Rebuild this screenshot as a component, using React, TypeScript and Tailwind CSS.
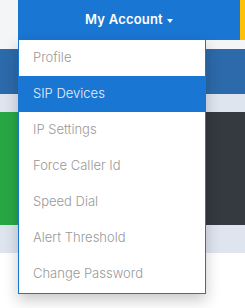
export default function App() {
  const items = [
    "Profile",
    "SIP Devices",
    "IP Settings",
    "Force Caller Id",
    "Speed Dial",
    "Alert Threshold",
    "Change Password",
  ];
  const active = 1;

  return (
    <div
      className="relative w-[245px] h-[308px] overflow-hidden bg-white"
      style={{ fontFamily: "Inter, 'Open Sans', sans-serif" }}
    >
      {/* top nav */}
      <div className="flex h-10 bg-[#f4f5f7]">
        <div className="w-[18px]" />
        <div className="flex flex-1 items-center justify-center bg-[#1976d2] text-white">
          <span className="text-[13px] font-semibold tracking-[0.2px]">My Account</span>
          <span className="ml-[4px] mt-[1px] h-0 w-0 border-x-[3px] border-t-[4px] border-x-transparent border-t-white" />
        </div>
        <div className="w-[5px] bg-[#ffc107]" />
      </div>

      {/* page underneath */}
      <div className="h-[9px] bg-[#f4f5f7]" />
      <div className="h-[45px] bg-[#2c6aab]" />
      <div className="h-[18px] bg-[#dfe5ef]" />
      <div className="flex h-[113px]">
        <div className="w-[18px] bg-[#28a745]" />
        <div className="flex-1 bg-white" />
        <div className="w-[40px] bg-[#343a40]" />
      </div>
      <div className="h-[28px] bg-[#dfe5ef]" />

      {/* dropdown */}
      <div className="absolute left-[18px] top-10 w-[188px] border border-t-0 border-[#1976d2] bg-white pb-px shadow-[0_6px_14px_rgba(0,0,0,0.22)]">
        {items.map((item, i) => (
          <div
            key={item}
            className={
              i === active
                ? "flex h-9 items-center bg-[#1976d2] pl-[14px] text-[13px] font-light text-[#eaf1fb]"
                : "flex h-9 items-center pl-[14px] text-[13px] font-light text-[#999999]"
            }
          >
            {item}
          </div>
        ))}
      </div>
    </div>
  );
}
